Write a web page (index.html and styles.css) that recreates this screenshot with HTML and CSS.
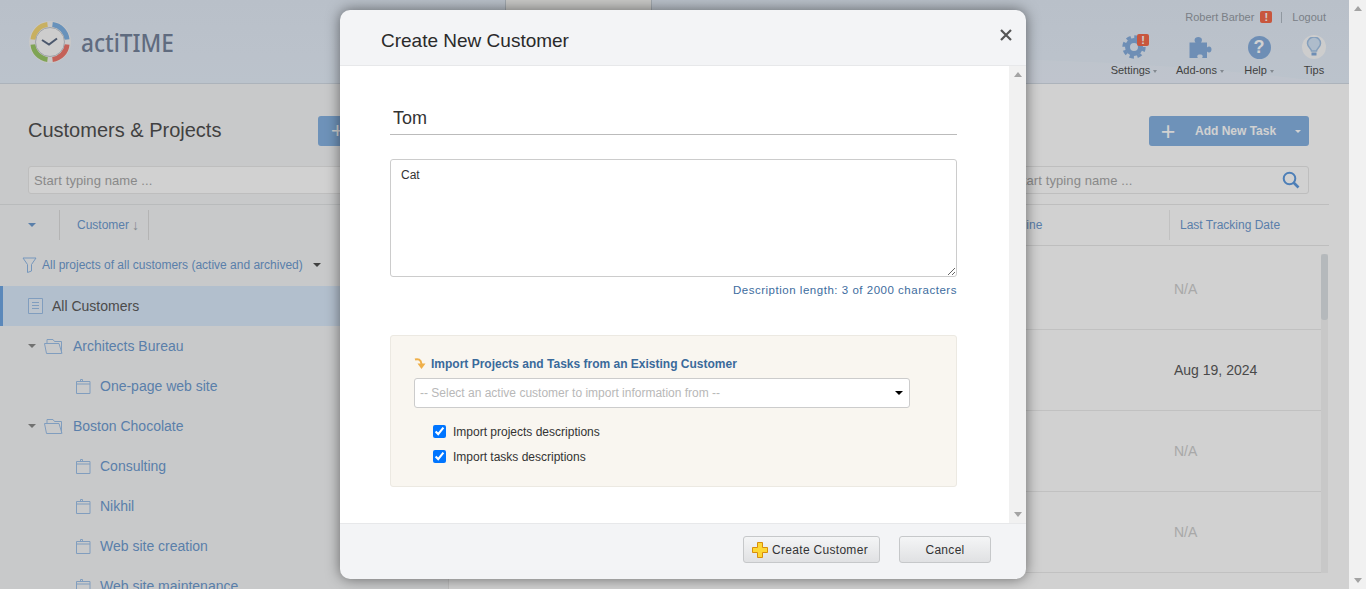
FILE: index.html
```html
<!DOCTYPE html>
<html lang="en">
<head>
    <meta charset="UTF-8">
    <meta name="viewport" content="width=device-width, initial-scale=1.0">
    <title>actiTIME - Create New Customer</title>
    <link rel="stylesheet" href="styles.css">
</head>
<body>
    <div class="app">
        <header class="top-bar">
            <div class="logo">
                <svg class="logo-mark" width="44" height="44" viewBox="0 0 44 44">
                    <circle cx="22" cy="22" r="21" fill="#f4f4f4"/>
                    <g fill="none" stroke-width="5">
                        <path d="M6 20.5A16.5 16.5 0 0 1 20.5 5.5" stroke="#f5d777" transform="translate(-1 -1)"/>
                        <path d="M23.5 5.5A16.5 16.5 0 0 1 38 20.5" stroke="#7fb2e5" transform="translate(1 -1)"/>
                        <path d="M38 23.5A16.5 16.5 0 0 1 23.5 38.5" stroke="#f0776c" transform="translate(1 1)"/>
                        <path d="M20.5 38.5A16.5 16.5 0 0 1 6 23.5" stroke="#9cc867" transform="translate(-1 1)"/>
                    </g>
                    <circle cx="22" cy="22" r="14.5" fill="#fafafa" stroke="#c4c8ce"/>
                    <path d="M14 20l7 4.5 8-6" fill="none" stroke="#5d6c85" stroke-width="2"/>
                </svg>
                <span class="logo-text">actiTIME</span>
            </div>
            <div class="top-tab"></div>
            <div class="top-right">
                <div class="user-line">
                    <span>Robert Barber</span>
                    <span class="alert-mark">!</span>
                    <span class="user-sep"></span>
                    <span>Logout</span>
                </div>
                <nav class="tools">
                    <div class="tool tool-settings">
                        <div class="tool-icon">
                            <svg width="24" height="24" viewBox="0 0 24 24">
                                <circle cx="12" cy="12" r="6.5" fill="none" stroke="#87aedd" stroke-width="5"/>
                                <circle cx="12" cy="12" r="10" fill="none" stroke="#87aedd" stroke-width="3.4" stroke-dasharray="4.4 3.45"/>
                            </svg>
                            <span class="alert-mark tool-badge">!</span>
                        </div>
                        <div class="tool-label">Settings<span class="tool-caret"></span></div>
                    </div>
                    <div class="tool tool-addons">
                        <div class="tool-icon">
                            <svg width="24" height="24" viewBox="0 0 24 24">
                                <path d="M1.500 7.500h6c-1.500-1.500-1.500-5.500 2.800-5.500s4.300 4 2.700 5.500h6v5c1.500-1.500 4.500-1.300 4.500 2s-3 3.500-4.500 2v6.500h-5c1.300-1.500 1-3.500-2-3.500s-3.300 2-2 3.500h-8.500z" fill="#87aedd"/>
                            </svg>
                        </div>
                        <div class="tool-label">Add-ons<span class="tool-caret"></span></div>
                    </div>
                    <div class="tool tool-help">
                        <div class="tool-icon">
                            <span class="help-mark">?</span>
                        </div>
                        <div class="tool-label">Help<span class="tool-caret"></span></div>
                    </div>
                    <div class="tool tool-tips">
                        <div class="tool-icon">
                            <span class="tips-mark">
                                <svg width="16" height="20" viewBox="0 0 16 20">
                                    <path d="M5.500 14c0-2.500-4-4-4-7.500a6.500 6.500 0 0 1 13 0c0 3.500-4 5-4 7.500z" fill="#d5e6f8" stroke="#a3c3e6" stroke-width="1.500"/>
                                    <path d="M5.500 15.500h5v3h-5z" fill="#87aedd"/>
                                </svg>
                            </span>
                        </div>
                        <div class="tool-label">Tips</div>
                    </div>
                </nav>
            </div>
        </header>

        <main class="content">
            <section class="left-panel">
                <div class="panel-title-row">
                    <h1 class="panel-title">Customers &amp; Projects</h1>
                    <div class="add-button add-button-left">+</div>
                </div>
                <div class="search-box search-box-left">Start typing name ...</div>
                <div class="tree-head">
                    <span class="caret-down caret-blue"></span>
                    <span class="tree-head-name">Customer <span class="sort-arrow">↓</span></span>
                </div>
                <div class="filter-row">
                    <svg width="15" height="16" viewBox="0 0 15 16">
                        <path d="M1 1h13L9.500 7.500V14l-4 1.500V7.500z" fill="none" stroke="#8fb8e6"/>
                    </svg>
                    <span>All projects of all customers (active and archived)</span>
                    <span class="caret-down caret-dark"></span>
                </div>
                <ul class="tree">
                    <li class="tree-row tree-row-all">
                        <svg width="16" height="16" viewBox="0 0 16 16">
                            <path d="M.5.500h14v15H.5z" fill="#e6f0fb" stroke="#9dc0e8"/>
                            <path d="M4 4.500h7M4 7.500h7M4 10.500h7" stroke="#9dc0e8"/>
                        </svg>
                        <span>All Customers</span>
                    </li>
                    <li class="tree-row tree-customer">
                        <span class="caret-down caret-grey"></span>
                        <svg width="20" height="16" viewBox="0 0 20 16">
                            <path d="M3 5V1.500h6l1.500 2h7V15.500H2.500L.500 5.500H15l3 10" fill="none" stroke="#9dc0e8"/>
                        </svg>
                        <span>Architects Bureau</span>
                    </li>
                    <li class="tree-row tree-project">
                        <svg width="15" height="15" viewBox="0 0 15 15">
                            <path d="M.5 2.500h13.500v12H.5zM.5 5h13.500M4.500 2.500V.500h2v2" fill="none" stroke="#9dc0e8"/>
                        </svg>
                        <span>One-page web site</span>
                    </li>
                    <li class="tree-row tree-customer">
                        <span class="caret-down caret-grey"></span>
                        <svg width="20" height="16" viewBox="0 0 20 16">
                            <path d="M3 5V1.500h6l1.500 2h7V15.500H2.500L.500 5.500H15l3 10" fill="none" stroke="#9dc0e8"/>
                        </svg>
                        <span>Boston Chocolate</span>
                    </li>
                    <li class="tree-row tree-project">
                        <svg width="15" height="15" viewBox="0 0 15 15">
                            <path d="M.5 2.500h13.500v12H.5zM.5 5h13.500M4.500 2.500V.500h2v2" fill="none" stroke="#9dc0e8"/>
                        </svg>
                        <span>Consulting</span>
                    </li>
                    <li class="tree-row tree-project">
                        <svg width="15" height="15" viewBox="0 0 15 15">
                            <path d="M.5 2.500h13.500v12H.5zM.5 5h13.500M4.500 2.500V.500h2v2" fill="none" stroke="#9dc0e8"/>
                        </svg>
                        <span>Nikhil</span>
                    </li>
                    <li class="tree-row tree-project">
                        <svg width="15" height="15" viewBox="0 0 15 15">
                            <path d="M.5 2.500h13.500v12H.5zM.5 5h13.500M4.500 2.500V.500h2v2" fill="none" stroke="#9dc0e8"/>
                        </svg>
                        <span>Web site creation</span>
                    </li>
                    <li class="tree-row tree-project">
                        <svg width="15" height="15" viewBox="0 0 15 15">
                            <path d="M.5 2.500h13.500v12H.5zM.5 5h13.500M4.500 2.500V.500h2v2" fill="none" stroke="#9dc0e8"/>
                        </svg>
                        <span>Web site maintenance</span>
                    </li>
                </ul>
            </section>

            <section class="right-panel">
                <div class="right-actions">
                    <div class="add-button add-task">
                        <span class="add-plus">+</span>
                        <span class="add-text">Add New Task</span>
                        <span class="add-caret"></span>
                    </div>
                </div>
                <div class="search-line">
                    <div class="search-box search-box-right">
                        <span>Start typing name ...</span>
                        <svg width="18" height="18" viewBox="0 0 18 18">
                            <circle cx="7.500" cy="7.500" r="5.800" fill="none" stroke="#5f9be0" stroke-width="2"/>
                            <path d="M11.500 11.500l5 5" stroke="#5f9be0" stroke-width="2.600"/>
                        </svg>
                    </div>
                </div>
                <div class="table-head">
                    <div class="head-deadline">Deadline</div>
                    <div class="head-tracking">Last Tracking Date</div>
                </div>
                <div class="table-body">
                    <div class="table-rows">
                        <div class="table-row na">N/A</div>
                        <div class="table-row">Aug 19, 2024</div>
                        <div class="table-row na">N/A</div>
                        <div class="table-row na">N/A</div>
                    </div>
                    <div class="table-track"><div class="table-thumb"></div></div>
                </div>
            </section>
        </main>

        <div class="overlay"></div>

        <div class="modal">
            <div class="modal-head">
                <h2 class="modal-title">Create New Customer</h2>
                <svg class="modal-close" width="12" height="12" viewBox="0 0 12 12">
                    <path d="M1 1l10 10M11 1L1 11" stroke="#555" stroke-width="2.200"/>
                </svg>
            </div>
            <div class="modal-body">
                <div class="modal-form">
                    <input class="name-input" type="text" value="Tom">
                    <textarea class="desc-input">Cat</textarea>
                    <div class="desc-count">Description length: 3 of 2000 characters</div>
                    <div class="import-box">
                        <div class="import-title">
                            <svg width="13" height="13" viewBox="0 0 13 13">
                                <path d="M1 1.500c3-1 6 0 6.500 4.500" fill="none" stroke="#efb04a" stroke-width="2"/>
                                <path d="M3.500 5.500h8L7.500 11z" fill="#efb04a"/>
                            </svg>
                            <span>Import Projects and Tasks from an Existing Customer</span>
                        </div>
                        <div class="import-select">
                            <span>-- Select an active customer to import information from --</span>
                            <span class="caret-down caret-black"></span>
                        </div>
                        <label class="import-check"><input type="checkbox" checked>Import projects descriptions</label>
                        <label class="import-check"><input type="checkbox" checked>Import tasks descriptions</label>
                    </div>
                </div>
                <div class="modal-scroll">
                    <span class="scroll-up"></span>
                    <span class="scroll-down"></span>
                </div>
            </div>
            <div class="modal-foot">
                <button class="foot-button foot-create" type="button">
                    <svg width="16" height="16" viewBox="0 0 16 16">
                        <path d="M5.500.500h5v5h5v5h-5v5h-5v-5h-5v-5h5z" fill="#fdd835" stroke="#d98e0a"/>
                    </svg>
                    Create Customer
                </button>
                <button class="foot-button foot-cancel" type="button">Cancel</button>
            </div>
        </div>
    </div>

    <div class="page-scroll">
        <span class="scroll-up"></span>
        <span class="scroll-down"></span>
    </div>
</body>
</html>
```

FILE: styles.css
```css
/* Reset */
html, body {
    margin: 0;
    padding: 0;
    height: 100%;
    overflow: hidden;
}

body {
    display: flex;
    font-family: "Liberation Sans", Arial, sans-serif;
    font-size: 12px;
    color: #555;
}

.app {
    position: relative;
    flex: 1;
    min-width: 0;
    display: flex;
    flex-direction: column;
    overflow: hidden;
    background-color: #fff;
}

/* Dim layer over the whole page */
.overlay {
    position: absolute;
    top: 0;
    left: 0;
    right: 0;
    bottom: 0;
    background-color: rgba(0, 0, 0, 0.18);
}

/* Top bar */
.top-bar {
    position: relative;
    flex: none;
    display: flex;
    height: 83px;
    border-bottom: 1px solid #d2dbe5;
    background: linear-gradient(180deg, #e2ebf6 0%, #e5eef9 100%);
    overflow: hidden;
}

.top-bar::before {
    content: "";
    position: absolute;
    top: 58px;
    left: 170px;
    width: 1500px;
    height: 300px;
    border-radius: 50%;
    background-color: rgba(255, 255, 255, 0.16);
}

.logo {
    position: relative;
    flex: none;
    width: 477px;
    padding: 20px 0 0 28px;
    display: flex;
    gap: 9px;
    align-items: flex-start;
}

.logo-mark {
    flex: none;
}

.logo-text {
    font-family: "Noto Sans", sans-serif;
    font-size: 26px;
    font-weight: 500;
    line-height: 44px;
    color: #75839b;
    transform: scaleX(0.87);
    transform-origin: left center;
}

.top-tab {
    position: relative;
    flex: none;
    width: 145px;
    border-left: 1px solid #c4ccd4;
    border-right: 1px solid #c4ccd4;
    background-color: #f4f4f2;
}

.top-right {
    position: relative;
    margin-left: auto;
    display: flex;
    flex-direction: column;
    align-items: flex-end;
}

.user-line {
    display: flex;
    align-items: center;
    gap: 6px;
    height: 18px;
    margin-top: 8px;
    padding-right: 23px;
    font-size: 11px;
    color: #969ca5;
}

.alert-mark {
    display: block;
    width: 12px;
    height: 12px;
    border-radius: 2px;
    background-color: #f46a4b;
    color: #fff;
    font-size: 11px;
    font-weight: bold;
    line-height: 12px;
    text-align: center;
}

.user-sep {
    width: 1px;
    height: 11px;
    margin: 0 4px 0 3px;
    background-color: #b0bac4;
}

.tools {
    display: flex;
    padding-right: 6px;
    margin-top: 8px;
}

.tool {
    display: flex;
    flex-direction: column;
    align-items: center;
}

.tool-settings, .tool-addons { width: 66px; }
.tool-help { width: 52px; }
.tool-tips { width: 58px; }

.tool-icon {
    position: relative;
    display: flex;
    align-items: center;
    justify-content: center;
    height: 26px;
}

.tool-badge {
    position: absolute;
    top: 0;
    left: 15px;
}

.help-mark {
    display: block;
    width: 23px;
    height: 23px;
    border-radius: 50%;
    background-color: #87aedd;
    color: #fff;
    font-size: 18px;
    font-weight: bold;
    line-height: 23px;
    text-align: center;
}

.tips-mark {
    display: flex;
    align-items: center;
    justify-content: center;
    width: 24px;
    height: 24px;
    border-radius: 50%;
    background-color: #fafafa;
}

.tool-label {
    margin-top: 3px;
    font-size: 11px;
    line-height: 14px;
    color: #505050;
    white-space: nowrap;
}

.tool-caret {
    display: inline-block;
    margin-left: 3px;
    vertical-align: middle;
    border-left: 2.5px solid transparent;
    border-right: 2.5px solid transparent;
    border-top: 3px solid #a0a8b0;
}

/* Page columns */
.content {
    flex: 1;
    min-height: 0;
    display: flex;
}

.left-panel {
    flex: none;
    width: 448px;
    border-right: 1px solid #e8e8e8;
    background-color: #f5f6f7;
}

.right-panel {
    flex: 1;
    min-width: 0;
    background-color: #fff;
}

.panel-title-row {
    display: flex;
    justify-content: space-between;
    align-items: center;
    height: 30px;
    margin-top: 32px;
    padding-left: 28px;
}

.panel-title {
    margin: 0 0 2px;
    font-size: 20px;
    font-weight: normal;
    color: #505050;
}

/* Blue add buttons */
.add-button {
    display: flex;
    align-items: center;
    height: 30px;
    border-radius: 3px;
    background-color: #87b3e2;
    color: #fff;
}

.add-button-left {
    width: 130px;
    padding-left: 13px;
    box-sizing: border-box;
    font-size: 22px;
}

.add-task {
    width: 160px;
    font-weight: bold;
}

.add-plus {
    width: 38px;
    text-align: center;
    font-size: 25px;
    font-weight: normal;
}

.add-text {
    margin-left: 8px;
    font-size: 12px;
}

.add-caret {
    margin-left: 19px;
    border-left: 3px solid transparent;
    border-right: 3px solid transparent;
    border-top: 3px solid #fff;
}

.right-actions {
    display: flex;
    justify-content: flex-end;
    margin-top: 32px;
    padding-right: 40px;
}

/* Search fields */
.search-box {
    box-sizing: border-box;
    height: 28px;
    margin-top: 20px;
    padding: 0 5px;
    display: flex;
    align-items: center;
    justify-content: space-between;
    border: 1px solid #e8e8e8;
    border-radius: 3px;
    background-color: #fff;
    font-size: 13px;
    letter-spacing: 0.1px;
    color: #a8a8a8;
}

.search-box-left {
    margin-left: 28px;
}

.search-line {
    display: flex;
    justify-content: flex-end;
    padding-right: 40px;
}

.search-box-right {
    width: 301px;
    padding-right: 8px;
}

/* Customer tree */
.tree-head {
    display: flex;
    align-items: center;
    box-sizing: border-box;
    height: 41px;
    margin-top: 10px;
    padding-left: 28px;
    border-top: 1px solid #e2e4e6;
}

.tree-head-name {
    display: flex;
    align-items: center;
    gap: 3px;
    width: 71px;
    height: 30px;
    margin-left: 23px;
    padding-left: 17px;
    border-left: 1px solid #dcdcdc;
    border-right: 1px solid #dcdcdc;
    color: #6e9bd0;
}

.sort-arrow {
    color: #a2a8b0;
    font-size: 14px;
}

.filter-row {
    display: flex;
    align-items: center;
    gap: 5px;
    height: 40px;
    padding-left: 22px;
    color: #6e9bd0;
}

.caret-down {
    display: block;
    width: 0;
    height: 0;
    flex: none;
    border-left: 4px solid transparent;
    border-right: 4px solid transparent;
    border-top: 4px solid #555;
}

.caret-blue { border-top-color: #6e9bd0; }
.caret-dark { margin-left: 5px; border-top-color: #505050; }
.caret-grey { border-top-color: #8a8a8a; }
.caret-black { border-top-color: #000; }

.tree {
    margin: 0;
    padding: 0;
    list-style: none;
}

.tree-row {
    display: flex;
    align-items: center;
    height: 40px;
    font-size: 14px;
    color: #6e9bd0;
}

.tree-row-all {
    gap: 8px;
    margin-top: 1px;
    padding-left: 25px;
    border-left: 3px solid #6fa6e3;
    background-color: #dae9fa;
    color: #5c5c5c;
}

.tree-customer {
    padding-left: 28px;
}

.tree-customer svg {
    margin: 0 9px 0 8px;
}

.tree-project {
    padding-left: 76px;
}

.tree-project svg {
    margin-right: 9px;
}

/* Tracking table */
.table-head {
    display: flex;
    box-sizing: border-box;
    height: 42px;
    margin: 10px 20px 0 0;
    border-top: 1px solid #e8e8e8;
    border-bottom: 1px solid #e8e8e8;
    align-items: center;
    color: #6e9bd0;
}

.head-deadline {
    flex: 1;
    padding-left: 546px;
}

.head-tracking {
    width: 149px;
    height: 30px;
    line-height: 30px;
    padding-left: 10px;
    border-left: 1px solid #ececec;
}

.table-body {
    display: flex;
    margin-right: 21px;
    padding-top: 3px;
}

.table-rows {
    flex: 1;
}

.table-row {
    box-sizing: border-box;
    height: 81px;
    padding-left: 725px;
    line-height: 80px;
    border-bottom: 1px solid #ececec;
    font-size: 14px;
    color: #5a5a5a;
}

.table-row.na {
    color: #cecece;
}

.table-track {
    width: 7px;
    margin-top: 5px;
    background-color: #f4f4f4;
}

.table-thumb {
    height: 66px;
    border-radius: 3px;
    background-color: #dde2e6;
}

/* Modal */
.modal {
    position: absolute;
    top: 10px;
    left: 340px;
    width: 686px;
    height: 569px;
    display: flex;
    flex-direction: column;
    border-radius: 10px;
    overflow: hidden;
    background-color: #f3f4f6;
    box-shadow: 0 0 14px rgba(0, 0, 0, 0.5);
}

.modal-head {
    flex: none;
    box-sizing: border-box;
    height: 56px;
    display: flex;
    justify-content: space-between;
    padding: 21px 14px 0 41px;
    border-bottom: 1px solid #e7e8ea;
}

.modal-title {
    margin: 0;
    font-size: 19px;
    font-weight: normal;
    line-height: 20px;
    color: #2a2a2a;
}

.modal-close {
    margin-top: -2px;
}

.modal-body {
    flex: 1;
    min-height: 0;
    display: flex;
    background-color: #fff;
}

.modal-form {
    flex: 1;
    display: flex;
    flex-direction: column;
    padding: 35px 52px 0 50px;
}

.name-input {
    box-sizing: border-box;
    height: 34px;
    padding: 2px 3px 0;
    border: 0;
    border-bottom: 1px solid #bbb;
    outline: none;
    font-family: inherit;
    font-size: 18px;
    color: #333;
}

.desc-input {
    box-sizing: border-box;
    height: 118px;
    margin-top: 24px;
    padding: 8px 10px;
    border: 1px solid #ccc;
    border-radius: 3px;
    outline: none;
    font-family: inherit;
    font-size: 12px;
    color: #333;
}

.desc-count {
    margin-top: 6px;
    text-align: right;
    font-size: 11.5px;
    line-height: 14px;
    letter-spacing: 0.52px;
    color: #3d6c9e;
}

.import-box {
    box-sizing: border-box;
    height: 152px;
    margin-top: 38px;
    padding: 20px 23px 0;
    border: 1px solid #ece9e2;
    border-radius: 3px;
    background-color: #f9f6f0;
}

.import-title {
    display: flex;
    align-items: center;
    gap: 4px;
    height: 16px;
    font-weight: bold;
    color: #3a6a9b;
}

.import-select {
    box-sizing: border-box;
    width: 496px;
    height: 30px;
    margin: 6px 0 11px;
    padding: 0 6px 0 5px;
    display: flex;
    align-items: center;
    justify-content: space-between;
    border: 1px solid #ccc;
    border-radius: 3px;
    background-color: #fff;
    color: #b8b8b8;
}

.import-check {
    display: flex;
    align-items: center;
    gap: 7px;
    height: 25px;
    padding-left: 19px;
    color: #333;
}

.import-check input {
    margin: 0;
}

.modal-scroll, .page-scroll {
    flex: none;
    width: 17px;
    display: flex;
    flex-direction: column;
    justify-content: space-between;
    align-items: center;
    padding: 6px 0;
    background-color: #f1f1f1;
}

.scroll-up {
    border-left: 4px solid transparent;
    border-right: 4px solid transparent;
    border-bottom: 5px solid #a3a3a3;
}

.scroll-down {
    border-left: 4px solid transparent;
    border-right: 4px solid transparent;
    border-top: 5px solid #a3a3a3;
}

.modal-foot {
    flex: none;
    box-sizing: border-box;
    height: 56px;
    display: flex;
    justify-content: flex-end;
    gap: 19px;
    padding: 12px 35px 0 0;
    border-top: 1px solid #e7e8ea;
}

.foot-button {
    box-sizing: border-box;
    height: 27px;
    display: flex;
    align-items: center;
    justify-content: center;
    gap: 4px;
    padding: 0;
    border: 1px solid #c6c8ca;
    border-radius: 3px;
    background: linear-gradient(180deg, #f4f5f6 0%, #e0e1e3 100%);
    font-family: inherit;
    font-size: 12px;
    letter-spacing: 0.3px;
    color: #333;
}

.foot-create { width: 137px; padding-right: 3px; }
.foot-cancel { width: 92px; }
```
